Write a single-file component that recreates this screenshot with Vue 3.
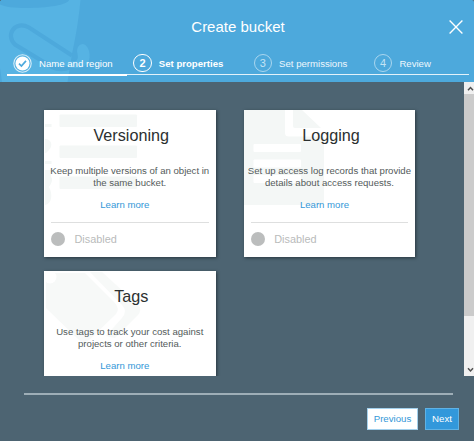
<script setup>
const steps = [
  { n: 1, label: 'Name and region', state: 'done' },
  { n: 2, label: 'Set properties', state: 'active' },
  { n: 3, label: 'Set permissions', state: 'todo' },
  { n: 4, label: 'Review', state: 'todo' },
]
const cards = [
  { id: 'versioning', title: 'Versioning', status: 'Disabled', lines: ['Keep multiple versions of an object in', 'the same bucket.'] },
  { id: 'logging', title: 'Logging', status: 'Disabled', lines: ['Set up access log records that provide', 'details about access requests.'] },
  { id: 'tags', title: 'Tags', lines: ['Use tags to track your cost against', 'projects or other criteria.'] },
]
</script>

<template>
  <div class="dialog">
    <header class="header">
      <svg class="bucket" width="92" height="82" viewBox="0 0 92 82">
        <path d="M0 0H80.500C78 25 75 40 72 54L67.500 82H2L0 68Z" fill="#56b3e3" />
        <path d="M0 0H69C68 5 47 8 26 8C14 8 5 7 0 4.500Z" fill="#4da9dc" />
        <path d="M72 55.500L29 27.500C15 20 5 35 15 44.500L52 67C58 70 64 70 71 67" fill="none" stroke="#4da9dc" stroke-width="4.200" />
        <path d="M69 61C76 63 79 60 77.500 54C76 48 79 44 83 44C91 46 92 62 85 66C80 69 73 69 67 66Z" fill="#56b3e3" />
      </svg>
      <h1 class="title">Create bucket</h1>
      <button class="close" aria-label="Close">
        <svg width="14" height="14" viewBox="0 0 14 14">
          <path d="M.6.6L13.400 13.400M13.400.6L.6 13.400" stroke="#fff" stroke-width="1.350" />
        </svg>
      </button>
      <nav class="steps">
        <div v-for="s in steps" :key="s.n" class="step" :class="s.state">
          <svg v-if="s.state === 'done'" class="check" width="19" height="19" viewBox="0 0 19 19">
            <circle cx="9.500" cy="9.500" r="8.700" fill="none" stroke="#d7edf8" stroke-width="1.100" />
            <circle cx="9.500" cy="9.500" r="7" fill="#fff" />
            <path d="M6 9.700L8.400 12L13 6.900" fill="none" stroke="#4da9dc" stroke-width="1.700" />
          </svg>
          <span v-else class="num">{{ s.n }}</span>
          <span class="label">{{ s.label }}</span>
        </div>
      </nav>
      <div class="progress"><div class="bar"></div></div>
    </header>

    <div class="body">
      <main class="cards">
        <section v-for="c in cards" :key="c.id" class="card" :class="c.id">
          <svg v-if="c.id === 'versioning'" class="mark" width="100" height="100" viewBox="0 0 100 100">
            <g fill="#f4f7f6">
              <rect x="15.500" y="4.500" width="77.500" height="12.500" rx="1" />
              <rect x="15.500" y="35.500" width="77.500" height="12.500" rx="1" />
              <rect x="15.500" y="66.500" width="77.500" height="12.500" rx="1" />
              <path d="M1 14H7.500V17H1ZM1 29C8 29 9 36 5 40L2 43H1ZM1 51H7.500V54H1V60H7V67C9 69 8 73 5 77C9 84 8 94 1 95Z" />
            </g>
          </svg>
          <svg v-else-if="c.id === 'logging'" class="mark" width="100" height="100" viewBox="0 0 100 100">
            <path d="M0 0H41V23Q41 26.500 45 26.500H80V95H0Z" fill="#f4f7f6" />
            <path d="M49 0H58L77 18H51Q49 18 49 16Z" fill="#f4f7f6" />
            <rect x="9.500" y="34" width="47.500" height="8" rx="1" fill="#fff" />
            <rect x="9.500" y="49.500" width="47.500" height="8" rx="1" fill="#fff" />
            <rect x="9.500" y="65" width="47.500" height="8" rx="1" fill="#fff" />
          </svg>
          <svg v-else class="mark" width="100" height="100" viewBox="0 0 100 100">
            <path d="M2 2H41L71 32Q76 38 72 43L45 69Q39 73 34 68L2 37Z" fill="#f7f9f8" />
            <path d="M46 1H58L95 35Q98 39 94 44L71 67L62 65L78 47Q84 40 78 34Z" fill="#f7f9f8" />
            <circle cx="6" cy="6" r="6.500" fill="#fff" />
          </svg>
          <h2>{{ c.title }}</h2>
          <p><span v-for="l in c.lines" :key="l">{{ l }}</span></p>
          <a>Learn more</a>
          <div v-if="c.status" class="status"><i></i><span>{{ c.status }}</span></div>
        </section>
      </main>
      <aside class="scrollbar">
        <svg class="arrow" width="10" height="12" viewBox="0 0 10 12"><path d="M4 8.200L6.500 5.500L9 8.200" /></svg>
        <div class="thumb"></div>
        <svg class="arrow" width="10" height="12" viewBox="0 0 10 12"><path d="M4 4.300L6.500 7L9 4.300" /></svg>
      </aside>
    </div>

    <footer class="footer">
      <button class="btn previous">Previous</button>
      <button class="btn next">Next</button>
    </footer>
  </div>
</template>

<style>
body { margin: 0; background: #4d6472; }
</style>

<style scoped>
.dialog {
  width: 474px;
  height: 441px;
  overflow: hidden;
  background: #4d6472;
  font-family: "Liberation Sans", Arial, sans-serif;
  font-size: 9.6px;
  color: #545b5b;
}
.header {
  position: relative;
  height: 82px;
  box-sizing: border-box;
  padding: 17px 5px 0 7px;
  background: #4da9dc;
  color: #fff;
  border-radius: 3px 2px 0 0;
  overflow: hidden;
}
.bucket { position: absolute; left: 0; top: 0; }
.title {
  position: relative;
  margin: 0;
  text-align: center;
  font-size: 15px;
  font-weight: 400;
  line-height: 20px;
}
.close {
  position: absolute;
  top: 20px;
  right: 11px;
  width: 14px;
  height: 14px;
  padding: 0;
  border: 0;
  background: none;
}
.close svg { display: block; }
.steps {
  position: relative;
  display: grid;
  grid-template-columns: repeat(4, 120.3px);
  margin-top: 16px;
  padding-left: 6px;
}
.step { display: flex; align-items: center; gap: 7px; height: 20px; white-space: nowrap; }
.check { flex: none; }
.num {
  width: 18.5px;
  height: 18.5px;
  box-sizing: border-box;
  border: 1.5px solid #fff;
  border-radius: 50%;
  text-align: center;
  font-size: 11px;
  line-height: 16.5px;
}
.active { font-weight: 700; }
.todo .num { border: 1px solid #a9d6ef; color: #c4e3f4; }
.todo .label { color: #eef7fc; }
.progress { position: relative; height: 1px; margin-top: 1px; background: #e3f2fa; }
.bar { width: 120px; height: 2px; background: #fff; }
.body { display: flex; height: 294px; overflow: hidden; }
.cards {
  flex: 1;
  display: grid;
  grid-template-columns: 171.5px 171.5px;
  grid-auto-rows: 147px;
  gap: 14px 28.2px;
  padding: 28px 0 0 44px;
}
.card {
  position: relative;
  box-sizing: border-box;
  padding: 14px 0 0;
  background: #fff;
  box-shadow: 1px 1px 3px rgba(20, 30, 35, .65);
  text-align: center;
}
.mark { position: absolute; left: 0; top: 0; }
h2 {
  position: relative;
  margin: 0;
  padding-left: 3px;
  color: #2c3030;
  font-size: 16.2px;
  font-weight: 400;
  line-height: 22px;
}
p { position: relative; margin: 19px 0 0; line-height: 12.3px; white-space: nowrap; }
p span { display: block; }
a { position: relative; display: block; margin: 9.5px 10px 0 0; line-height: 12px; color: #3498d8; }
.status {
  display: flex;
  align-items: center;
  gap: 9.5px;
  margin: 11px 7px 0;
  padding-top: 9px;
  border-top: 1px solid #dedfdf;
  color: #b9bbbb;
  font-size: 10.9px;
  line-height: 14px;
}
.status i { width: 14px; height: 14px; border-radius: 50%; background: #bbbdbd; }
.scrollbar { display: flex; flex-direction: column; justify-content: space-between; width: 10px; background: #f0f0f0; }
.arrow { flex: none; display: block; fill: none; stroke: #4f4f4f; stroke-width: 1.5; }
.thumb { height: 222px; margin-bottom: auto; background: #cbcbcb; }
.footer {
  display: flex;
  justify-content: flex-end;
  gap: 7px;
  margin: 17px 22px 0 24px;
  padding-top: 15px;
  position: relative;
}
.footer::before {
  content: "";
  position: absolute;
  top: 0;
  left: 0;
  width: 428.5px;
  height: 2px;
  background: #9eaeb7;
}
.btn {
  box-sizing: border-box;
  width: 51px;
  height: 22px;
  padding: 0;
  border: 1px solid #a3d0ec;
  background: #fff;
  color: #3498d8;
  font: 9.67px/20px "Liberation Sans", Arial, sans-serif;
}
.next { width: 34px; margin-right: -7px; background: #3298db; border-color: #5fb2e5; color: #fff; }
</style>
